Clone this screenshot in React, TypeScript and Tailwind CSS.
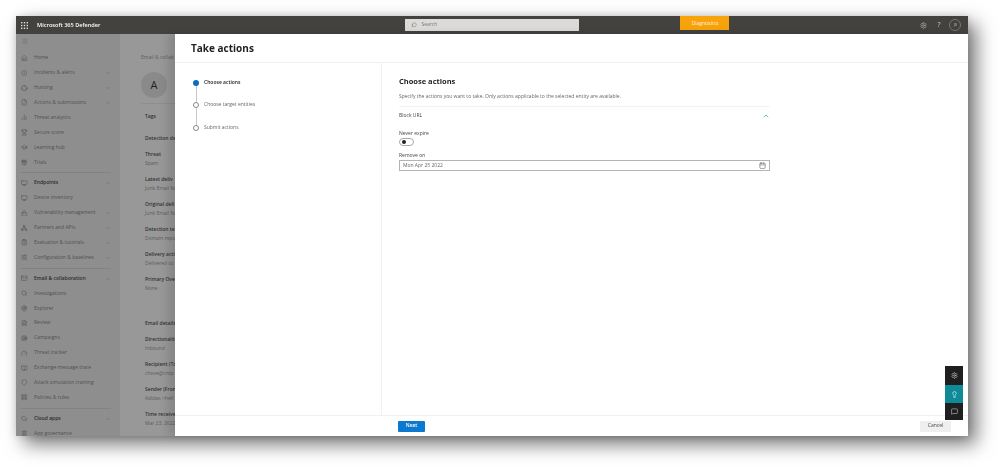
import {
  BarChart2, BookOpen, Calendar, ChevronDown, ChevronUp, Cloud, FileText, Gauge, GraduationCap, Home, Landmark,
  LayoutGrid, Lightbulb, Mail, MessageSquare, Menu, Network, Search, Settings, Shield, ShieldAlert, SlidersHorizontal, Target, Trophy, Monitor, ClipboardList, FileCheck, Gift, Crosshair, Radar, Lock,
} from 'lucide-react';

type NavItem = { label: string; icon: typeof Home; chevron?: 'up' | 'down'; bold?: boolean; dividerAfter?: boolean };

const navItems: NavItem[] = [
  { label: 'Home', icon: Home },
  { label: 'Incidents & alerts', icon: ShieldAlert, chevron: 'down' },
  { label: 'Hunting', icon: Crosshair, chevron: 'down' },
  { label: 'Actions & submissions', icon: FileCheck, chevron: 'down' },
  { label: 'Threat analytics', icon: BarChart2 },
  { label: 'Secure score', icon: Trophy },
  { label: 'Learning hub', icon: GraduationCap },
  { label: 'Trials', icon: Gift, dividerAfter: true },
  { label: 'Endpoints', icon: Monitor, chevron: 'up', bold: true },
  { label: 'Device inventory', icon: Monitor },
  { label: 'Vulnerability management', icon: Lock, chevron: 'down' },
  { label: 'Partners and APIs', icon: Network, chevron: 'down' },
  { label: 'Evaluation & tutorials', icon: ClipboardList, chevron: 'down' },
  { label: 'Configuration & baselines', icon: SlidersHorizontal, chevron: 'down', dividerAfter: true },
  { label: 'Email & collaboration', icon: Mail, chevron: 'up', bold: true },
  { label: 'Investigations', icon: Search },
  { label: 'Explorer', icon: Radar },
  { label: 'Review', icon: FileText },
  { label: 'Campaigns', icon: Target },
  { label: 'Threat tracker', icon: Gauge },
  { label: 'Exchange message trace', icon: BookOpen },
  { label: 'Attack simulation training', icon: Shield },
  { label: 'Policies & rules', icon: LayoutGrid, dividerAfter: true },
  { label: 'Cloud apps', icon: Cloud, chevron: 'up', bold: true },
  { label: 'App governance', icon: Landmark },
];

// only the part of each label that shows left of the flyout
const details = [
  { title: 'Threat', value: 'Spam' },
  { title: 'Latest deliv', value: 'Junk Email fo' },
  { title: 'Original deli', value: 'Junk Email fo' },
  { title: 'Detection te', value: 'Domain repu' },
  { title: 'Delivery acti', value: 'Delivered to' },
  { title: 'Primary Ove', value: 'None' },
];

const emailDetails = [
  { title: 'Directionalit', value: 'Inbound' },
  { title: 'Recipient (To', value: 'chove@cntp' },
  { title: 'Sender (Fron', value: 'Adidas <hell' },
  { title: 'Time receive', value: 'Mar 23, 2022' },
];

function Field({ title, value }: { title: string; value: string }) {
  return (
    <div className="h-[25px] whitespace-nowrap">
      <div className="h-[9px] leading-[9px] font-semibold text-[#333]">{title}</div>
      <div className="h-[9px] leading-[9px] text-[#5c5c5c]">{value}</div>
    </div>
  );
}

function WaffleIcon() {
  return (
    <svg width="7" height="7" viewBox="0 0 7 7" className="ml-[5px] text-[#ddd]" fill="currentColor">
      <rect x="0" y="0" width="1.4" height="1.4" />
      <rect x="2.8" y="0" width="1.4" height="1.4" />
      <rect x="5.6" y="0" width="1.4" height="1.4" />
      <rect x="0" y="2.8" width="1.4" height="1.4" />
      <rect x="2.8" y="2.8" width="1.4" height="1.4" />
      <rect x="5.6" y="2.8" width="1.4" height="1.4" />
      <rect x="0" y="5.6" width="1.4" height="1.4" />
      <rect x="2.8" y="5.6" width="1.4" height="1.4" />
      <rect x="5.6" y="5.6" width="1.4" height="1.4" />
    </svg>
  );
}

export default function App() {
  return (
    <div className="w-[999px] h-[467px] overflow-hidden bg-white pt-4 pl-4 font-['Open_Sans','Liberation_Sans',sans-serif] text-[5px]">
      <div className="relative flex h-[420px] w-[952px] flex-col blur-[0.3px] shadow-[8px_8px_18px_rgba(0,0,0,0.55),0_0_8px_rgba(0,0,0,0.12)]">
        {/* top bar */}
        <header className="relative flex h-[18px] shrink-0 items-center bg-[#44423f] text-white">
          <WaffleIcon />
          <span className="ml-[9px] text-[5.6px] font-semibold">Microsoft 365 Defender</span>
          <div className="ml-[305px] flex h-[12px] w-[174px] items-center gap-[4px] bg-[#dcdbd9] pl-[6px] text-[#777]">
            <Search size={6} className="-scale-x-100" />
            <span>Search</span>
          </div>
          <div className="ml-[101px] -mt-[4px] flex h-[14px] w-[49px] items-center justify-center bg-[#f7a30c] pt-[1px] text-[#fff3d8]">Diagnostics</div>
          <Settings size={7} className="ml-[191px] text-[#bbb]" />
          <span className="ml-[10px] text-[7px] text-[#ccc]">?</span>
          <div className="ml-[9px] flex h-[12px] w-[12px] items-center justify-center rounded-full border border-[#777] text-[3.5px] text-[#ccc]">JS</div>
        </header>

        <div className="flex min-h-0 flex-1">
          {/* dimmed nav */}
          <nav className="flex w-[104px] shrink-0 flex-col overflow-hidden bg-[#8e8e8e] pl-[5px] pr-[9px] pt-[3px] text-[#505050]">
            <Menu size={6} className="mb-[6.6px] ml-[1px] mt-[1px] shrink-0 text-[#666]" />
            {navItems.map((item) => {
              const Icon = item.icon;
              return (
                <div key={item.label} className="shrink-0">
                  <div className="flex h-[14.9px] items-center whitespace-nowrap">
                    <Icon size={6.5} className="mr-[6.5px] shrink-0 text-[#555]" />
                    <span className={item.bold ? 'flex-1 font-semibold text-[#2c2c2c]' : 'flex-1'}>{item.label}</span>
                    {item.chevron === 'down' && <ChevronDown size={6} className="text-[#6a6a6a]" />}
                    {item.chevron === 'up' && <ChevronUp size={6} className="text-[#6a6a6a]" />}
                  </div>
                  {item.dividerAfter && <div className="my-[2.5px] h-px bg-[#828282]" />}
                </div>
              );
            })}
          </nav>

          {/* dimmed detail page behind the panel */}
          <main className="w-[55px] shrink-0 overflow-hidden bg-[#989898] pl-[21px] pt-[19px]">
            <div className="whitespace-nowrap leading-[9px] text-[#5c5c5c]">Email & collab</div>
            <div className="mt-[10px] flex items-center gap-[8px] whitespace-nowrap">
              <div className="flex h-[26px] w-[26px] shrink-0 items-center justify-center rounded-full bg-[#8a8a8a] text-[11px] text-[#222]">A</div>
              <span className="-mt-[6px] text-[11px] leading-[14px] font-semibold text-[#111]">A</span>
            </div>
            <div className="mt-[5px] border-t border-[#8e8e8e] pl-[4px] pt-[8px] whitespace-nowrap">
              <div className="h-[22px] leading-[9px] font-semibold text-[#333]">Tags</div>
              <div className="h-[16px] leading-[9px] font-semibold text-[#333]">Detection de</div>
              {details.map((d) => <Field key={d.title} {...d} />)}
              <div className="mt-[19px] h-[16px] leading-[9px] font-semibold text-[#333]">Email details</div>
              {emailDetails.map((d) => <Field key={d.title} {...d} />)}
            </div>
          </main>

          {/* Take actions flyout */}
          <section className="relative flex min-w-0 flex-1 flex-col bg-white shadow-[-7px_0_9px_rgba(0,0,0,0.12)]">
            <div className="flex h-[29px] shrink-0 items-center border-b border-[#f1f1f1] pl-[16px]">
              <h1 className="text-[10px] font-bold text-[#201f1e]">Take actions</h1>
            </div>
            <div className="flex min-h-0 flex-1">
              <aside className="w-[207px] shrink-0 border-r border-[#f1f1f1] pl-[18px] pt-[17px] text-[#666]">
                <div className="flex h-[6px] items-center gap-[5px]">
                  <span className="h-[6px] w-[6px] rounded-full bg-[#0f6cbd]" />
                  <span className="font-semibold text-[#222]">Choose actions</span>
                </div>
                <div className="ml-[2.5px] h-[16px] w-px bg-[#c8c8c8]" />
                <div className="flex h-[6px] items-center gap-[5px]">
                  <span className="h-[6px] w-[6px] rounded-full border border-[#888]" />
                  <span>Choose target entities</span>
                </div>
                <div className="ml-[2.5px] h-[16.5px] w-px bg-[#c8c8c8]" />
                <div className="flex h-[6px] items-center gap-[5px]">
                  <span className="h-[6px] w-[6px] rounded-full border border-[#888]" />
                  <span>Submit actions</span>
                </div>
              </aside>
              <div className="min-w-0 flex-1 pl-[17px] pt-[12px]">
                <h2 className="text-[7.5px] leading-[12px] font-bold text-[#201f1e]">Choose actions</h2>
                <p className="mt-[5px] leading-[8px] text-[#666]">Specify the actions you want to take. Only actions applicable to the selected entity are available.</p>
                <div className="mt-[6px] w-[371px]">
                  <div className="flex h-[18px] items-center justify-between border-t border-[#f3f3f3] text-[#444]">
                    <span>Block URL</span>
                    <ChevronUp size={8} className="text-[#2f9e97]" />
                  </div>
                  <div className="mt-[5px] leading-[8px] text-[#444]">Never expire</div>
                  <div className="mt-[1px] flex h-[8px] w-[15px] items-center rounded-full border border-[#aaa] pl-[1.5px]">
                    <span className="h-[4px] w-[4px] rounded-full bg-[#222]" />
                  </div>
                  <div className="mt-[5px] leading-[8px] text-[#444]">Remove on</div>
                  <div className="mt-[1px] flex h-[11px] items-center justify-between border border-[#b4b4b4] pl-[3px] pr-[3px] text-[#666]">
                    <span>Mon Apr 25 2022</span>
                    <Calendar size={7} className="text-[#666]" />
                  </div>
                </div>
              </div>
            </div>
            <div className="flex h-[21px] shrink-0 items-center justify-between border-t border-[#f1f1f1] pl-[223px] pr-[17px]">
              <button className="h-[11px] w-[27px] rounded-[1px] bg-[#0b79d0] font-semibold text-white">Next</button>
              <button className="h-[11px] w-[31px] rounded-[1px] bg-[#efefef] text-[#444]">Cancel</button>
            </div>
          </section>
        </div>

        {/* floating help buttons */}
        <div className="absolute right-[5px] top-[350px] flex w-[18px] flex-col text-white">
          <div className="flex h-[19px] items-center justify-center bg-[#1f1f1f]"><Settings size={7} className="text-[#ccc]" /></div>
          <div className="flex h-[18px] items-center justify-center bg-[#0e8a99]"><Lightbulb size={7} /></div>
          <div className="flex h-[17px] items-center justify-center bg-[#1f1f1f]"><MessageSquare size={7} className="text-[#ccc]" /></div>
        </div>
      </div>
    </div>
  );
}
